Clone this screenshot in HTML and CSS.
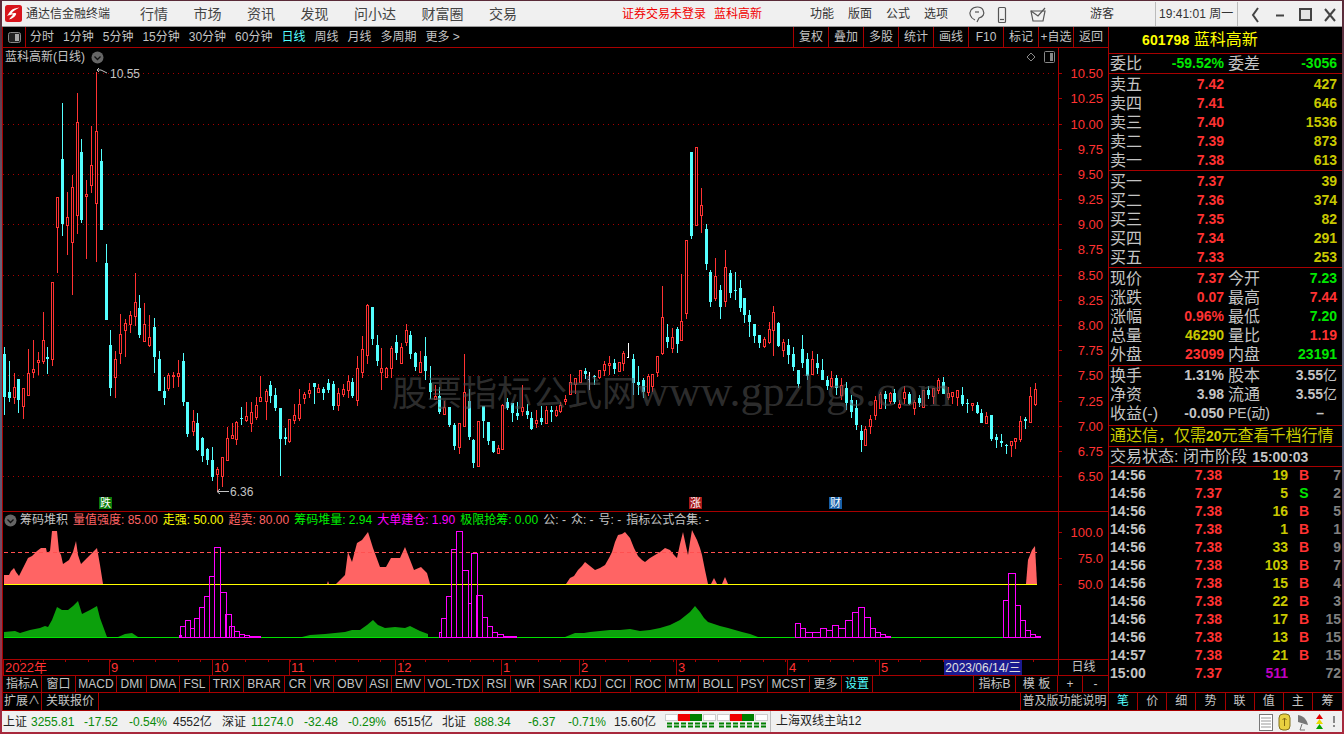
FILE: index.html
```html
<!DOCTYPE html>
<html lang="zh-CN">
<head>
    <meta charset="UTF-8">
    <title>通达信金融终端</title>
    <link rel="stylesheet" href="styles.css">
</head>
<body>
<div class="app">
    <div class="titlebar">
        <svg class="logo" width="17" height="17" viewBox="0 0 17 17">
            <rect width="17" height="17" rx="2.5" fill="#d8141c"/>
            <path d="M14.5 2.5 C11 3 8 3.5 6 5.5 C4.5 7 3.5 9 2 11 C4.5 10 6 9.5 8 9.5 C7 11 5.5 12.5 4 14.5 C7.5 13.5 10 12 11 9.5 C11.5 8.5 11 8 9.5 8 C8.5 8 7.5 8.2 6.5 8.5 C8 6 11 4.5 14.5 2.5 Z" fill="#fff"/>
        </svg>
        <span class="app-name">通达信金融终端</span>
        <nav class="nav">
            <span>行情</span><span>市场</span><span>资讯</span><span>发现</span><span>问小达</span><span>财富圈</span><span>交易</span>
        </nav>
        <span class="notice">证券交易未登录</span>
        <span class="notice notice-stock">蓝科高新</span>
        <div class="tools">
            <span>功能</span><span>版面</span><span>公式</span><span>选项</span>
        </div>
        <svg class="title-icons" width="85" height="24" viewBox="965 1 85 24" fill="none" stroke="#555" stroke-width="1.2">
            <path d="M975 19 C970 17 969 12 971 9 C974 5 981 5 983 9 C985 13 983 16 979 17 L977 21"/>
            <path d="M975 11 L979 11"/>
            <rect x="998.5" y="6.5" width="7" height="15" rx="1"/>
            <path d="M1000 18.5 H1004"/>
            <path d="M1031 10 H1045 L1043 20 H1033 Z"/>
            <path d="M1031 10 L1038 15 L1045 7"/>
        </svg>
        <span class="user">游客</span>
        <span class="clock">19:41:01 周一</span>
        <svg class="win-controls" width="98" height="24" viewBox="1240 1 98 24" fill="none" stroke="#444" stroke-width="2">
            <path d="M1258 7 L1253 14 L1258 21"/>
            <path d="M1276 14.5 H1284"/>
            <rect x="1300" y="8" width="11" height="11" fill="#e4e4e4"/>
            <path d="M1325 8 L1335 20 M1335 8 L1325 20"/>
        </svg>
    </div>

    <div class="main">
        <div class="left">
            <div class="toolbar">
                <div class="panel-toggle">
                    <svg width="13" height="11" viewBox="0 0 13 11">
                        <rect x="0.5" y="0.5" width="12" height="10" rx="2" fill="#222" stroke="#888"/>
                        <rect x="7" y="2" width="4" height="7" fill="#aaa"/>
                    </svg>
                </div>
                <div class="periods">
                    <span>分时</span><span>1分钟</span><span>5分钟</span><span>15分钟</span><span>30分钟</span><span>60分钟</span>
                    <span class="active">日线</span><span>周线</span><span>月线</span><span>多周期</span><span>更多 &gt;</span>
                </div>
                <div class="actions">
                    <span>复权</span><span>叠加</span><span>多股</span><span>统计</span><span>画线</span><span>F10</span><span>标记</span><span>+自选</span><span>返回</span>
                </div>
            </div>

            <div class="chart-pane">
                <svg id="kline" class="pane-svg" width="1105" height="463" viewBox="3 48 1105 463"></svg>
                <div class="chart-title">
                    <span>蓝科高新(日线)</span>
                    <svg width="13" height="13" viewBox="0 0 13 13">
                        <circle cx="6.5" cy="6.5" r="6" fill="#666"/>
                        <path d="M3.5 5.5 L6.5 8.5 L9.5 5.5" fill="none" stroke="#111" stroke-width="1.3"/>
                    </svg>
                </div>
                <svg class="chart-corner" width="32" height="14" viewBox="0 0 32 14" fill="none" stroke="#888">
                    <path d="M7 3 L11 7 L7 11 L3 7 Z"/>
                    <rect x="20.5" y="1.5" width="10" height="11" rx="1"/>
                    <rect x="26" y="3" width="3" height="8" fill="#888" stroke="none"/>
                </svg>
                <div class="watermark">股票指标公式网<span class="watermark-url">www.gpzbgs.com</span></div>
            </div>

            <div class="indicator-pane">
                <div class="ind-head">
                    <svg class="ind-toggle" width="13" height="13" viewBox="0 0 13 13">
                        <circle cx="6.5" cy="6.5" r="6" fill="#666"/>
                        <path d="M3.5 5.5 L6.5 8.5 L9.5 5.5" fill="none" stroke="#111" stroke-width="1.3"/>
                    </svg>
                    <span class="ind-name">筹码堆积</span>
                    <span class="c-salmon">量值强度: 85.00</span>
                    <span class="c-yellow">走强: 50.00</span>
                    <span class="c-salmon">超卖: 80.00</span>
                    <span class="c-lime">筹码堆量: 2.94</span>
                    <span class="c-magenta">大单建仓: 1.90</span>
                    <span class="c-lime">极限抢筹: 0.00</span>
                    <span class="ind-name">公: -</span>
                    <span class="ind-name">众: -</span>
                    <span class="ind-name">号: -</span>
                    <span class="ind-name">指标公式合集: -</span>
                </div>
                <svg id="indicator" class="pane-svg" width="1105" height="131" viewBox="3 528 1105 131">
                    <g fill="#ff6464">
                        <polygon points="4,584 4,575 9,575 11,571 14,568 16,572 19,576 23,568 28,558 32,556 37,551 41,548 46,548 47,553 50,551 52,531 57,531 59,551 61,555 63,564 69,560 73,552 76,541 78,555 81,564 87,558 93,552 97,548 100,565 103,584"/>
                        <polygon points="327,584 328,581 329,584"/>
                        <polygon points="336,584 338,582 345,575 348,552 352,562 357,543 362,540 368,532 373,548 380,567 386,567 391,558 400,558 405,547 414,570 421,567 427,573 430,584"/>
                        <polygon points="566,584 570,578 574,576 578,570 582,566 585,562 590,566 595,570 600,568 605,565 609,558 612,552 615,542 618,535 622,534 625,532 630,538 634,548 638,556 642,560 645,562 650,558 655,555 660,552 665,548 670,550 674,555 677,558 680,544 683,532 686,546 688,555 690,542 692,530 697,540 700,548 702,555 705,570 708,584"/>
                        <polygon points="711,584 714,578 717,584"/>
                        <polygon points="722,584 725,577 728,584"/>
                        <polygon points="1026,584 1028,560 1032,550 1035,546 1037,584"/>
                    </g>
                    <g fill="#0ca00c">
                        <polygon points="4,637 4,632 15,631 20,633 30,630 40,628 45,626 48,627 52,620 57,607 62,610 68,610 73,606 78,601 82,614 90,610 97,606 100,618 107,637"/>
                        <polygon points="118,637 125,634 132,633 135,635 138,637"/>
                        <polygon points="302,637 310,635 325,634 335,633 345,632 352,630 360,630 367,625 373,620 378,625 385,628 395,627 405,628 410,626 420,631 428,634 428,637"/>
                        <polygon points="565,637 575,633 584,633 590,632 600,631 610,630 620,630 630,629 640,631 650,630 660,628 670,625 680,620 685,616 690,612 695,606 700,612 704,618 708,622 714,624 720,626 728,628 735,630 742,632 750,634 758,637"/>
                    </g>
                    <path d="M4 584.5 H1037" stroke="#ffff00" fill="none"/>
                    <path d="M4 552.5 H1037" stroke="#ff5050" stroke-dasharray="4 3" fill="none"/>
                    <path d="M4 637.5 H1040" stroke="#00e000" fill="none"/>
                </svg>
            </div>

            <div class="time-axis">
                <svg id="timeline" class="pane-svg" width="1055" height="15" viewBox="3 660 1055 15"></svg>
                <div class="period-label">日线</div>
            </div>

            <div class="tabs tabs-main">
                <span>指标A</span><span>窗口</span><span>MACD</span><span>DMI</span><span>DMA</span><span>FSL</span><span>TRIX</span><span>BRAR</span><span>CR</span><span>VR</span><span>OBV</span><span>ASI</span><span>EMV</span><span>VOL-TDX</span><span>RSI</span><span>WR</span><span>SAR</span><span>KDJ</span><span>CCI</span><span>ROC</span><span>MTM</span><span>BOLL</span><span>PSY</span><span>MCST</span><span>更多</span><span class="active">设置</span><span></span><span>指标B</span><span>模 板</span><span>+</span><span>-</span>
            </div>
            <div class="tabs tabs-sub">
                <span>扩展∧</span><span>关联报价</span><span></span><span>普及版功能说明</span>
            </div>
        </div>

        <div class="side">
            <div class="stock-head"><b>601798</b> 蓝科高新</div>
            <div class="group">
                <div class="row"><i>委比</i><b class="green">-59.52%</b><i>委差</i><b class="green">-3056</b></div>
            </div>
            <div class="group group-book">
                <div class="row"><i>卖五</i><b class="red">7.42</b><b class="olive col4">427</b></div>
                <div class="row"><i>卖四</i><b class="red">7.41</b><b class="olive col4">646</b></div>
                <div class="row"><i>卖三</i><b class="red">7.40</b><b class="olive col4">1536</b></div>
                <div class="row"><i>卖二</i><b class="red">7.39</b><b class="olive col4">873</b></div>
                <div class="row"><i>卖一</i><b class="red">7.38</b><b class="olive col4">613</b></div>
            </div>
            <div class="group group-book">
                <div class="row"><i>买一</i><b class="red">7.37</b><b class="olive col4">39</b></div>
                <div class="row"><i>买二</i><b class="red">7.36</b><b class="olive col4">374</b></div>
                <div class="row"><i>买三</i><b class="red">7.35</b><b class="olive col4">82</b></div>
                <div class="row"><i>买四</i><b class="red">7.34</b><b class="olive col4">291</b></div>
                <div class="row"><i>买五</i><b class="red">7.33</b><b class="olive col4">253</b></div>
            </div>
            <div class="group group-quote">
                <div class="row"><i>现价</i><b class="red">7.37</b><i>今开</i><b class="green">7.23</b></div>
                <div class="row"><i>涨跌</i><b class="red">0.07</b><i>最高</i><b class="red">7.44</b></div>
                <div class="row"><i>涨幅</i><b class="red">0.96%</b><i>最低</i><b class="green">7.20</b></div>
                <div class="row"><i>总量</i><b class="olive">46290</b><i>量比</i><b class="red">1.19</b></div>
                <div class="row"><i>外盘</i><b class="red">23099</b><i>内盘</i><b class="green">23191</b></div>
            </div>
            <div class="group group-fund">
                <div class="row"><i>换手</i><b>1.31%</b><i>股本</i><b>3.55<em>亿</em></b></div>
                <div class="row"><i>净资</i><b>3.98</b><i>流通</i><b>3.55<em>亿</em></b></div>
                <div class="row"><i>收益(-)</i><b>-0.050</b><i class="pe">PE(动)</i><b class="dash">–</b></div>
            </div>
            <div class="promo">通达信，仅需<b>20</b>元查看千档行情</div>
            <div class="market-state">交易状态: 闭市阶段 <b>15:00:03</b></div>
            <div class="trades">
                <div class="trade"><b>14:56</b><b class="red">7.38</b><b class="olive">19</b><b class="red side-flag">B</b><b class="seq">7</b></div>
                <div class="trade"><b>14:56</b><b class="red">7.37</b><b class="olive">5</b><b class="green side-flag">S</b><b class="seq">2</b></div>
                <div class="trade"><b>14:56</b><b class="red">7.38</b><b class="olive">16</b><b class="red side-flag">B</b><b class="seq">5</b></div>
                <div class="trade"><b>14:56</b><b class="red">7.38</b><b class="olive">1</b><b class="red side-flag">B</b><b class="seq">1</b></div>
                <div class="trade"><b>14:56</b><b class="red">7.38</b><b class="olive">33</b><b class="red side-flag">B</b><b class="seq">9</b></div>
                <div class="trade"><b>14:56</b><b class="red">7.38</b><b class="olive">103</b><b class="red side-flag">B</b><b class="seq">7</b></div>
                <div class="trade"><b>14:56</b><b class="red">7.38</b><b class="olive">15</b><b class="red side-flag">B</b><b class="seq">4</b></div>
                <div class="trade"><b>14:56</b><b class="red">7.38</b><b class="olive">22</b><b class="red side-flag">B</b><b class="seq">3</b></div>
                <div class="trade"><b>14:56</b><b class="red">7.38</b><b class="olive">17</b><b class="red side-flag">B</b><b class="seq">15</b></div>
                <div class="trade"><b>14:56</b><b class="red">7.38</b><b class="olive">13</b><b class="red side-flag">B</b><b class="seq">15</b></div>
                <div class="trade"><b>14:57</b><b class="red">7.38</b><b class="olive">21</b><b class="red side-flag">B</b><b class="seq">15</b></div>
                <div class="trade"><b>15:00</b><b class="red">7.37</b><b class="purple">511</b><b class="side-flag"></b><b class="seq">72</b></div>
            </div>
            <div class="side-tabs">
                <span class="active">笔</span><span>价</span><span>细</span><span>势</span><span>联</span><span>值</span><span>主</span><span>筹</span>
            </div>
        </div>
    </div>

    <div class="statusbar">
        <div class="indices">
            <span>上证</span><span class="up">3255.81</span><span class="up">-17.52</span><span class="up">-0.54%</span><span>4552亿</span>
            <span>深证</span><span class="up">11274.0</span><span class="up">-32.48</span><span class="up">-0.29%</span><span>6515亿</span>
            <span>北证</span><span class="up">888.34</span><span class="up">-6.37</span><span class="up">-0.71%</span><span>15.60亿</span>
        </div>
        <svg class="signal" width="104" height="17" viewBox="0 0 104 17">
            <g fill="#fff" stroke="#ccc">
                <rect x="0.5" y="1.5" width="12" height="6"/><rect x="38.5" y="1.5" width="12" height="6"/>
                <rect x="52.5" y="1.5" width="12" height="6"/><rect x="90.5" y="1.5" width="12" height="6"/>
            </g>
            <rect x="13" y="1" width="12" height="7" fill="#f00000"/><rect x="25" y="1" width="12" height="7" fill="#008000"/>
            <rect x="65" y="1" width="12" height="7" fill="#f00000"/><rect x="77" y="1" width="12" height="7" fill="#008000"/>
            <path d="M2 10.5 H50 M2 13.5 H50 M54 10.5 H102 M54 13.5 H102" stroke="#008000" stroke-width="2" stroke-dasharray="5 2" fill="none"/>
        </svg>
        <span class="server">上海双线主站12</span>
        <svg class="status-icons" width="86" height="19" viewBox="1256 712 86 19">
            <rect x="1259.5" y="714.5" width="13" height="16" fill="#fff" stroke="#777"/>
            <path d="M1261 718 H1271 M1261 721 H1271 M1261 724 H1271 M1261 727 H1271" stroke="#999"/>
            <rect x="1279" y="714" width="11" height="16" rx="4" fill="#e8d040" stroke="#807020"/>
            <path d="M1284.5 718 V726 M1282.5 720 L1284.5 718 L1286.5 720" stroke="#806810" fill="none"/>
            <path d="M1298 715 C1304 716 1307 720 1308 725 L1298 722 Z" fill="#777"/>
            <path d="M1302 724 L1300 730 H1305" stroke="#777" fill="none"/>
            <polygon points="1319.5,714 1323,719 1316,719" fill="#e00000"/>
            <polygon points="1319.5,719 1323,724 1316,724" fill="#e8d800"/>
            <polygon points="1319.5,724 1323,729 1316,729" fill="#00a000"/>
            <rect x="1333" y="716" width="2" height="7" fill="#888"/>
            <rect x="1333" y="725" width="2" height="2" fill="#888"/>
        </svg>
    </div>
</div>
<script src="chart.js"></script>
</body>
</html>
```
FILE: styles.css
```css
* {
    box-sizing: border-box;
}

html, body {
    height: 100%;
}

body {
    margin: 0;
    overflow: hidden;
    background: linear-gradient(180deg, #5a2a38, #6a6478 35%, #54607a 60%, #a8283c);
    font-family: "Liberation Sans", "Noto Sans CJK SC", sans-serif;
    font-size: 12px;
}

.app {
    margin: 1px 2px 0;
    height: 731px;
    display: flex;
    flex-direction: column;
    background: #000;
}

/* title bar */
.titlebar {
    height: 26px;
    flex: none;
    display: flex;
    align-items: center;
    background: #f0f0f0;
    border-bottom: 1px solid #9a9a9a;
    color: #333;
    line-height: 16px;
}

.logo {
    margin-left: 3px;
    flex: none;
}

.app-name {
    margin-left: 4px;
    width: 84px;
    white-space: nowrap;
}

.nav {
    display: flex;
    gap: 25.5px;
    margin-left: 30px;
    font-size: 14px;
    color: #444;
}

.notice {
    color: #f00000;
    margin-left: 105px;
}

.notice-stock {
    margin-left: 8px;
}

.tools {
    display: flex;
    gap: 14px;
    margin-left: 48px;
}

.title-icons {
    margin-left: 17px;
    flex: none;
}

.user {
    margin-left: 40px;
    width: 65px;
}

.clock {
    border-left: 1px solid #bbb;
    border-right: 1px solid #bbb;
    padding: 0 3px;
    width: 83px;
    height: 24px;
    line-height: 24px;
    white-space: nowrap;
}

.win-controls {
    margin-left: 2px;
    flex: none;
}

/* main area */
.main {
    flex: 1;
    display: flex;
    min-height: 0;
    border-left: 1px solid #a80000;
}

.left {
    width: 1106px;
    flex: none;
    display: flex;
    flex-direction: column;
    border-right: 1px solid #a80000;
}

.toolbar {
    height: 21px;
    flex: none;
    display: flex;
    border-bottom: 1px solid #a80000;
    color: #c4c4c4;
    line-height: 20px;
}

.panel-toggle {
    width: 23px;
    border-right: 1px solid #a80000;
    display: flex;
    align-items: center;
    justify-content: center;
}

.periods {
    display: flex;
    gap: 9px;
    padding-left: 4px;
    white-space: nowrap;
}

.periods .active,
.tabs .active,
.side-tabs .active {
    color: #54ffff;
}

.actions {
    margin-left: auto;
    display: flex;
}

.actions span {
    width: 35px;
    border-left: 1px solid #a80000;
    text-align: center;
    white-space: nowrap;
}

.chart-pane {
    height: 464px;
    flex: none;
    position: relative;
    border-bottom: 1px solid #a80000;
    overflow: hidden;
}

.pane-svg {
    display: block;
    flex: none;
    overflow: visible;
}

.pane-svg text {
    font-family: "Liberation Sans", "Noto Sans CJK SC", sans-serif;
}

.chart-title {
    position: absolute;
    left: 2px;
    top: 1px;
    display: flex;
    align-items: center;
    gap: 6px;
    color: #c4c4c4;
    line-height: 16px;
}

.chart-corner {
    position: absolute;
    left: 1021px;
    top: 2px;
}

.watermark {
    position: absolute;
    left: 389px;
    top: 325px;
    font-family: "Liberation Serif", "Noto Sans CJK SC", serif;
    font-size: 35px;
    line-height: 44px;
    white-space: nowrap;
    color: rgba(79, 79, 79, 0.58);
}

.watermark-url {
    font-size: 44px;
    line-height: 0;
}

.indicator-pane {
    height: 148px;
    flex: none;
    border-bottom: 1px solid #a80000;
}

.ind-head {
    height: 16px;
    width: 1056px;
    display: flex;
    align-items: center;
    gap: 5px;
    padding-left: 1px;
    border-right: 1px solid #a80000;
    line-height: 16px;
    white-space: nowrap;
}

.ind-toggle {
    margin-right: -2px;
    flex: none;
}

.ind-name {
    color: #c4c4c4;
}

.c-salmon {
    color: #ff6464;
}

.c-yellow {
    color: #ffff00;
}

.c-lime {
    color: #00f000;
}

.c-magenta {
    color: #ff00ff;
}

.time-axis {
    height: 16px;
    flex: none;
    display: flex;
    border-bottom: 1px solid #a80000;
}

.period-label {
    flex: 1;
    border-left: 1px solid #a80000;
    color: #c4c4c4;
    text-align: center;
    line-height: 15px;
}

.tabs {
    flex: none;
    display: grid;
    border-bottom: 1px solid #a80000;
    color: #c4c4c4;
    text-align: center;
    white-space: nowrap;
}

.tabs span {
    border-right: 1px solid #a80000;
    overflow: hidden;
}

.tabs span:last-child {
    border-right: none;
}

.tabs-main {
    height: 17px;
    line-height: 16px;
    grid-template-columns: 39px 34px 41px 30px 33px 30px 34px 41px 26px 23px 33px 25px 33px 58px 28px 29px 31px 30px 30px 35px 33px 39px 30px 42px 32px 31px 1fr 42px 42px 25px 25px;
}

.tabs-sub {
    height: 18px;
    line-height: 17px;
    grid-template-columns: 39px 57px 1fr 87px;
}

/* right hand quote panel */
.side {
    flex: 1;
    min-width: 0;
    display: flex;
    flex-direction: column;
    color: #c4c4c4;
}

.stock-head {
    height: 27px;
    flex: none;
    border-bottom: 1px solid #a80000;
    color: #ffff00;
    font-size: 16px;
    line-height: 26px;
    padding-left: 33px;
    white-space: nowrap;
}

.stock-head b {
    font-size: 14px;
    letter-spacing: 0.1px;
}

.group {
    flex: none;
    border-bottom: 1px solid #a80000;
}

.group-book {
    padding-top: 1px;
}

.group-quote {
    padding: 1px 0;
}

.group-fund {
    padding-bottom: 2px;
}

.row {
    height: 19px;
    display: grid;
    grid-template-columns: 33px 81px 32px 81px;
    padding-left: 1px;
    line-height: 19px;
    font-size: 16px;
    white-space: nowrap;
}

.row i {
    font-style: normal;
    font-weight: normal;
}

.row i:nth-of-type(2) {
    margin-left: 4px;
}

.row b {
    font-size: 14px;
    text-align: right;
}

.row b em {
    font-style: normal;
    font-weight: normal;
}

.row .col4 {
    grid-column: 4;
}

.row .pe {
    font-size: 14px;
}

.row .dash {
    padding-right: 13px;
}

.red {
    color: #ff3232;
}

.green {
    color: #00e800;
}

.olive {
    color: #c8c800;
}

.purple {
    color: #c000c0;
}

.promo {
    height: 21px;
    flex: none;
    border-bottom: 1px solid #a80000;
    color: #c8c800;
    font-size: 16px;
    line-height: 20px;
    padding-left: 1px;
    white-space: nowrap;
}

.promo b {
    font-size: 14px;
}

.market-state {
    height: 20px;
    flex: none;
    border-bottom: 1px solid #a80000;
    font-size: 16px;
    line-height: 19px;
    padding-left: 1px;
    white-space: nowrap;
}

.market-state b {
    font-size: 14px;
    margin-left: 1px;
}

.trades {
    flex: 1;
    min-height: 0;
}

.trade {
    height: 18px;
    display: grid;
    grid-template-columns: 36px 76px 66px 32px 21px;
    padding-left: 1px;
    font-size: 14px;
    line-height: 16px;
    text-align: right;
}

.trade b:first-child {
    text-align: left;
}

.side-flag {
    text-align: center;
}

.seq {
    color: #808080;
}

.side-tabs {
    height: 19px;
    flex: none;
    display: grid;
    grid-template-columns: repeat(8, 1fr);
    border-top: 1px solid #a80000;
    border-bottom: 1px solid #a80000;
    line-height: 17px;
    text-align: center;
}

.side-tabs span {
    border-right: 1px solid #a80000;
}

.side-tabs span:last-child {
    border-right: none;
}

/* status bar */
.statusbar {
    height: 21px;
    flex: none;
    display: flex;
    align-items: center;
    background: #f0f0f0;
    color: #222;
    line-height: 16px;
}

.indices {
    display: grid;
    grid-template-columns: 28px 53px 45px 44px 49px 29px 53px 44px 46px 48px 32px 54px 40px 46px 48px;
    padding-left: 1px;
    width: 660px;
    height: 100%;
    align-items: center;
    white-space: nowrap;
}

.up {
    color: #0a8a0a;
}

.signal {
    margin-left: 3px;
    flex: none;
}

.server {
    margin-left: 1px;
    padding-left: 5px;
    border-left: 1px solid #bbb;
    height: 100%;
    line-height: 21px;
    font-size: 12px;
    white-space: nowrap;
}

.status-icons {
    margin-left: auto;
    flex: none;
}
```
FILE: chart.js
```js
// type, x, body top, body bottom, wick top, wick bottom (page pixels)
const candles = [
    ['c',4,354,397,347,415],['c',9,392,398,361,402],['r',14,387,397,373,404],['c',18,379,400,379,413],
    ['r',23,388,406,388,419],['r',28,373,395,349,395],['r',33,369,372,340,378],['r',38,360,362,352,375],
    ['r',43,340,361,312,364],['c',47,357,359,347,374],['r',52,282,359,282,366],['r',57,197,227,197,273],
    ['c',62,159,224,103,236],['r',67,217,225,192,255],['r',72,187,242,175,295],['r',77,122,215,93,234],
    ['c',81,152,220,139,223],['r',86,194,196,180,259],['r',91,165,185,126,193],['r',96,131,203,72,262],
    ['c',101,161,230,149,230],['c',106,263,320,244,320],['c',110,345,388,330,396],['r',115,359,377,351,398],
    ['r',120,334,353,314,364],['r',125,323,330,319,357],['r',130,315,324,311,333],['r',135,302,316,273,326],
    ['c',139,308,335,295,338],['r',144,324,341,303,341],['r',149,337,345,315,347],['c',154,327,357,318,373],
    ['c',159,359,391,351,391],['c',164,391,398,377,405],['r',168,375,388,373,391],['r',173,375,376,372,388],
    ['r',178,373,376,360,387],['c',183,361,402,353,406],['c',187,402,434,402,437],['r',193,421,431,410,436],
    ['c',197,423,450,413,451],['c',202,438,456,437,462],['c',207,449,460,448,465],['c',212,460,477,447,481],
    ['r',217,469,474,467,492],['r',222,457,476,457,487],['r',227,438,460,427,461],['r',232,435,438,423,438],
    ['r',236,422,439,421,445],['c',241,418,419,407,425],['r',246,416,420,402,422],['r',251,412,423,402,432],
    ['r',256,405,417,397,420],['r',260,397,401,376,402],['r',266,391,401,389,420],['c',270,385,396,381,403],
    ['c',275,395,408,388,411],['c',280,408,439,408,476],['c',285,437,439,428,445],['r',289,419,441,419,443],
    ['r',294,415,420,404,424],['r',299,404,418,389,421],['r',304,394,398,392,404],['r',309,390,393,383,398],
    ['c',314,383,387,383,404],['r',318,388,392,384,393],['c',323,389,393,387,400],['c',328,383,390,379,393],
    ['c',333,384,406,381,410],['r',338,393,405,388,411],['r',343,389,394,384,397],['r',348,381,390,375,398],
    ['c',352,382,396,378,398],['r',357,368,400,356,406],['r',362,349,372,336,378],['r',367,305,355,304,364],
    ['c',372,307,339,307,345],['c',377,345,361,335,366],['r',381,368,372,348,390],['r',386,368,377,367,378],
    ['r',391,348,368,346,378],['c',396,342,353,335,360],['r',401,347,363,343,363],['r',406,330,342,324,346],
    ['c',410,335,354,331,359],['c',415,353,367,352,371],['r',420,362,372,351,373],['c',425,356,371,337,380],
    ['c',430,383,392,366,399],['r',435,396,399,385,399],['c',439,396,412,387,414],['r',444,407,414,401,415],
    ['c',449,407,425,407,427],['c',454,425,446,423,450],['r',459,423,447,423,454],['r',464,392,426,354,426],
    ['c',469,401,437,389,440],['c',473,440,463,439,468],['r',478,421,466,421,466],['c',483,406,421,406,438],
    ['c',488,422,441,422,445],['c',493,441,452,441,453],['r',498,448,453,445,453],['r',502,405,449,404,449],
    ['c',507,402,408,398,410],['c',512,403,413,403,422],['c',517,413,416,402,420],['r',522,407,411,385,416],
    ['c',527,411,415,404,419],['c',531,418,429,412,430],['r',536,420,423,410,428],['c',541,418,422,406,425],
    ['r',546,410,423,406,423],['c',551,410,412,406,422],['r',556,410,415,406,417],['r',560,405,411,402,413],
    ['r',565,399,401,395,405],['r',570,382,394,374,394],['r',575,378,384,378,394],['r',580,370,382,370,382],
    ['c',585,371,374,368,379],['w',589,379,379,372,390],['c',594,376,377,375,385],['r',599,370,377,370,379],
    ['r',604,364,370,361,376],['r',609,363,365,356,375],['c',614,363,369,359,374],['r',619,362,371,362,371],
    ['r',623,353,363,351,371],['w',628,357,357,343,357],['c',633,359,383,354,395],['c',638,382,385,366,395],
    ['c',643,380,392,378,398],['r',648,376,392,374,396],['r',652,374,386,374,392],['r',657,356,372,356,377],
    ['r',662,317,353,286,355],['c',667,337,342,324,348],['r',672,337,348,328,353],['c',677,329,344,327,353],
    ['r',681,321,340,274,340],['r',686,240,313,240,319],['c',691,152,236,152,239],['r',696,147,225,147,225],
    ['r',701,205,215,188,233],['c',706,229,264,224,270],['c',710,272,302,270,307],['r',715,276,298,258,301],
    ['c',720,290,307,285,319],['r',725,267,301,250,307],['c',730,273,293,270,298],['c',735,290,291,272,300],
    ['c',740,288,308,280,312],['c',744,298,315,298,323],['c',749,315,322,310,337],['c',754,324,336,324,343],
    ['c',759,335,343,335,348],['r',764,339,346,337,348],['r',769,329,342,322,344],['r',773,312,330,306,356],
    ['c',778,323,346,322,347],['r',783,342,350,339,357],['c',788,345,355,339,364],['c',793,354,367,347,371],
    ['c',798,370,384,370,388],['c',802,349,363,335,368],['c',807,359,376,353,380],['r',812,359,374,351,375],
    ['c',817,363,368,354,374],['c',822,370,380,359,380],['c',827,380,386,376,390],['r',831,378,386,371,388],
    ['c',836,378,388,375,395],['r',841,385,395,378,400],['c',846,388,403,382,410],['c',851,400,412,395,418],
    ['c',856,408,425,400,430],['c',861,431,440,425,452],['r',865,429,445,426,445],['r',870,419,426,415,434],
    ['r',875,400,415,396,420],['r',880,394,408,392,408],['c',885,394,399,391,409],['r',890,393,401,392,404],
    ['c',894,393,402,389,404],['r',899,404,407,400,409],['r',904,392,398,386,404],['c',909,394,404,392,405],
    ['r',914,402,408,400,415],['c',919,398,403,395,407],['r',923,390,407,390,408],['c',928,390,395,386,399],
    ['r',933,388,396,388,404],['r',938,380,390,378,394],['c',943,382,394,377,394],['r',948,393,397,387,400],
    ['r',952,392,396,392,404],['r',957,390,397,390,406],['c',962,395,404,387,406],['c',967,403,404,399,413],
    ['r',972,403,405,403,411],['c',977,405,413,402,414],['c',981,413,423,409,423],['r',986,416,423,412,423],
    ['c',991,415,439,415,441],['c',996,437,440,434,448],['c',1001,441,443,434,447],['c',1006,445,446,444,454],
    ['r',1011,441,445,441,457],['r',1015,438,441,438,449],['r',1020,421,439,416,442],['c',1025,419,421,417,429],
    ['r',1030,396,422,387,422],['r',1035,389,404,383,406]
];

const RED = '#ff3232';
const CYAN = '#54ffff';
const AXIS = '#a80000';

function drawCandle(c) {
    const [type, x, top, bot, wTop, wBot] = c;
    if (type === 'w') {
        return `<path d="M${x + 0.5} ${wTop} V${wBot} M${x - 1} ${top + 0.5} H${x + 1}" stroke="#fff"/>`;
    }
    const color = type === 'r' ? RED : CYAN;
    let out = `<path d="M${x + 0.5} ${wTop} V${wBot}" stroke="${color}"/>`;
    if (type === 'r') {
        out += `<rect x="${x - 0.5}" y="${top + 0.5}" width="2" height="${Math.max(bot - top, 1)}" fill="#000" stroke="${color}"/>`;
    } else {
        out += `<rect x="${x - 1}" y="${top}" width="3" height="${Math.max(bot - top, 1)}" fill="${color}"/>`;
    }
    return out;
}

function drawMain() {
    let out = '';
    // dotted price lines every 0.50
    for (let i = 0; i < 9; i++) {
        const y = Math.round(73.3 + 50.35 * i) + 0.5;
        out += `<path d="M3 ${y} H1058" stroke="#a80000" stroke-dasharray="1 4"/>`;
    }
    out += candles.map(drawCandle).join('');

    // price scale
    out += `<path d="M1058.5 48 V511" stroke="${AXIS}"/>`;
    for (let i = 0; i < 17; i++) {
        const y = Math.round(73.3 + 25.17 * i);
        const label = (10.5 - i * 0.25).toFixed(2);
        out += `<path d="M1058 ${y + 0.5} H1062" stroke="${AXIS}"/>`;
        out += `<text x="1103" y="${y + 5}" text-anchor="end" font-size="13" fill="${RED}">${label}</text>`;
    }

    // high / low notes
    out += '<path d="M107 73 L101 70 H97 M99 68 L97 70 L99 72" fill="none" stroke="#c4c4c4"/>';
    out += '<text x="110" y="78" font-size="12" fill="#c4c4c4">10.55</text>';
    out += '<path d="M229 491.5 H218 M220 489 L217 491.5 L220 494" fill="none" stroke="#c4c4c4"/>';
    out += '<text x="230" y="496" font-size="12" fill="#c4c4c4">6.36</text>';

    // event flags
    [[99, '跌', '#0a7a0a'], [689, '涨', '#a81818'], [829, '财', '#1860a8']].forEach(([x, text, bg]) => {
        out += `<rect x="${x}" y="497" width="13" height="12" fill="${bg}"/>`;
        out += `<text x="${x + 1}" y="507" font-size="11" fill="#fff">${text}</text>`;
    });
    document.getElementById('kline').innerHTML = out;
}

// [left, right, top]
const volumeBars = [
    [179,181,635],[180,185,626],[185,190,620],[190,194,628],[194,199,618],[199,204,607],[204,209,596],[209,214,576],
    [214,220,547],[220,226,592],[225,231,614],[229,234,626],[234,239,631],[239,244,634],[244,249,635],[249,260,636],
    [439,441,632],[441,446,618],[446,451,596],[451,456,549],[456,462,531],[462,468,570],[468,471,603],[471,477,553],
    [476,482,595],[482,487,617],[487,492,626],[492,497,632],[497,503,634],[503,516,636],
    [795,800,623],[800,805,628],[805,812,632],[812,820,632],[820,826,628],[826,832,630],[832,838,625],[838,845,628],
    [845,852,620],[852,858,612],[858,864,607],[864,870,617],[870,875,628],[875,880,632],[880,885,634],[885,890,636],
    [1003,1008,600],[1008,1015,573],[1015,1020,605],[1020,1025,620],[1025,1030,630],[1030,1035,634],[1035,1040,636]
];

function drawIndicator() {
    let out = '';
    volumeBars.forEach(([a, b, top]) => {
        out += `<rect x="${a + 0.5}" y="${top + 0.5}" width="${b - a}" height="${637 - top}" fill="none" stroke="#ff00ff"/>`;
    });
    out += `<path d="M1058.5 528 V659" stroke="${AXIS}"/>`;
    [[532, '100.0'], [558, '75.0'], [584, '50.0']].forEach(([y, label]) => {
        out += `<path d="M1058 ${y + 0.5} H1062" stroke="${AXIS}"/>`;
        out += `<text x="1103" y="${y + 5}" text-anchor="end" font-size="13" fill="${RED}">${label}</text>`;
    });
    document.getElementById('indicator').insertAdjacentHTML('beforeend', out);
}

function drawTimeline() {
    let out = '';
    for (let x = 20; x < 1055; x += 22.5) {
        out += `<path d="M${Math.round(x) + 0.5} 660 V662" stroke="${AXIS}"/>`;
    }
    [[3, '2022年'], [109, '9'], [212, '10'], [289, '11'], [395, '12'], [501, '1'], [579, '2'], [676, '3'], [787, '4'], [879, '5']].forEach(([x, label]) => {
        out += `<path d="M${x + 0.5} 660 V675" stroke="${AXIS}"/>`;
        out += `<text x="${x + 2}" y="672" font-size="13" fill="${RED}">${label}</text>`;
    });
    out += '<rect x="944" y="660" width="78" height="15" fill="#1a1a90"/>';
    out += '<text x="983" y="672" text-anchor="middle" font-size="12" fill="#e0e0e0">2023/06/14/三</text>';
    document.getElementById('timeline').innerHTML = out;
}

drawMain();
drawIndicator();
drawTimeline();
```
